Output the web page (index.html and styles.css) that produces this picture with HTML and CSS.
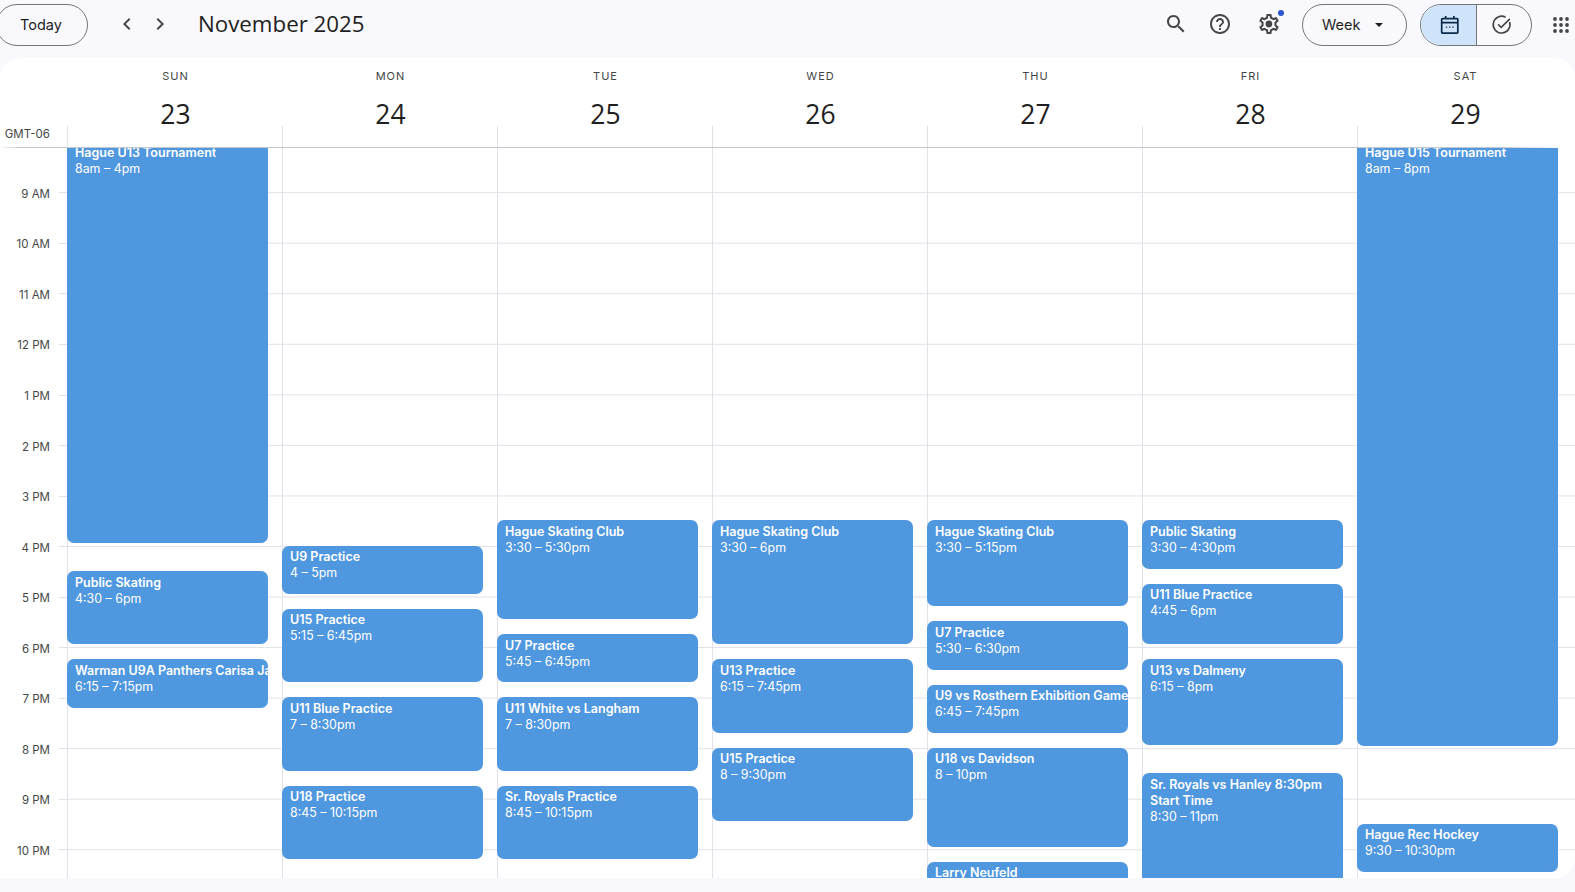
FILE: index.html
```html
<!DOCTYPE html>
<html lang="en">
<head>
<meta charset="utf-8">
<title>November 2025</title>
<link rel="stylesheet" href="styles.css">
</head>
<body>
<header class="topbar">
  <button class="pill today">Today</button>
  <div class="nav">
    <svg class="chev" viewBox="0 0 24 24"><path d="M15.4 7.4 14 6l-6 6 6 6 1.4-1.4L10.8 12z"/></svg>
    <svg class="chev" viewBox="0 0 24 24"><path d="M8.6 16.6 10 18l6-6-6-6-1.4 1.4 4.6 4.6z"/></svg>
  </div>
  <h1 class="month">November 2025</h1>
  <div class="tools">
    <svg class="icon search" viewBox="0 0 24 24"><path d="M15.5 14h-.79l-.28-.27C15.41 12.59 16 11.11 16 9.5 16 5.91 13.09 3 9.5 3S3 5.91 3 9.5 5.91 16 9.5 16c1.61 0 3.09-.59 4.23-1.57l.27.28v.79l5 4.99L20.49 19l-4.99-5zm-6 0C7.01 14 5 11.99 5 9.5S7.01 5 9.5 5 14 7.01 14 9.5 11.99 14 9.5 14z"/></svg>
    <svg class="icon help" viewBox="0 0 24 24"><path d="M11 18h2v-2h-2v2zm1-16C6.48 2 2 6.48 2 12s4.48 10 10 10 10-4.48 10-10S17.52 2 12 2zm0 18c-4.41 0-8-3.59-8-8s3.59-8 8-8 8 3.59 8 8-3.59 8-8 8zm0-14c-2.21 0-4 1.79-4 4h2c0-1.1.9-2 2-2s2 .9 2 2c0 2-3 1.75-3 5h2c0-2.25 3-2.5 3-5 0-2.21-1.79-4-4-4z"/></svg>
    <span class="gear">
      <svg class="icon" viewBox="0 0 24 24"><path d="M19.43 12.98c.04-.32.07-.64.07-.98 0-.34-.03-.66-.07-.98l2.11-1.65c.19-.15.24-.42.12-.64l-2-3.46c-.09-.16-.26-.25-.44-.25-.06 0-.12.01-.17.03l-2.49 1c-.52-.4-1.08-.73-1.69-.98l-.38-2.65C14.46 2.18 14.25 2 14 2h-4c-.25 0-.46.18-.49.42l-.38 2.65c-.61.25-1.17.59-1.69.98l-2.49-1c-.06-.02-.12-.03-.18-.03-.17 0-.34.09-.43.25l-2 3.46c-.13.22-.07.49.12.64l2.11 1.65c-.04.32-.07.65-.07.98 0 .33.03.66.07.98l-2.11 1.65c-.19.15-.24.42-.12.64l2 3.46c.09.16.26.25.44.25.06 0 .12-.01.17-.03l2.49-1c.52.4 1.08.73 1.69.98l.38 2.65c.03.24.24.42.49.42h4c.25 0 .46-.18.49-.42l.38-2.65c.61-.25 1.17-.59 1.69-.98l2.49 1c.06.02.12.03.18.03.17 0 .34-.09.43-.25l2-3.46c.12-.22.07-.49-.12-.64l-2.11-1.65zm-1.98-1.71c.04.31.05.52.05.73 0 .21-.02.43-.05.73l-.14 1.13.89.7 1.08.84-.7 1.21-1.27-.51-1.04-.42-.9.68c-.43.32-.84.56-1.25.73l-1.06.43-.16 1.13-.2 1.35h-1.4l-.19-1.35-.16-1.13-1.06-.43c-.43-.18-.83-.41-1.23-.71l-.91-.7-1.06.43-1.27.51-.7-1.21 1.08-.84.89-.7-.14-1.13c-.03-.31-.05-.54-.05-.74s.02-.43.05-.73l.14-1.13-.89-.7-1.08-.84.7-1.21 1.27.51 1.04.42.9-.68c.43-.32.84-.56 1.25-.73l1.06-.43.16-1.13.2-1.35h1.39l.19 1.35.16 1.13 1.06.43c.43.18.83.41 1.23.71l.91.7 1.06-.43 1.27-.51.7 1.21-1.07.85-.89.7.14 1.13z"/><circle cx="12" cy="12" r="3.4"/></svg>
      <i class="dot"></i>
    </span>
    <button class="pill viewbtn">Week<i class="caret"></i></button>
    <div class="toggle">
      <span class="seg on">
        <svg class="seg-icon" viewBox="0 0 20 20"><path d="M3.200 4.200h13.600a.7.7 0 0 1 .7.7v12.100a.7.7 0 0 1-.7.7H3.200a.7.7 0 0 1-.7-.7V4.900a.7.7 0 0 1 .7-.7zM2.500 8h15M6.200 1.800v3.400M13.800 1.800v3.400" fill="none" stroke-width="1.600"/><path d="M6.400 11.700h1.200v1.200H6.400zM9.400 11.700h1.200v1.200H9.400zM12.400 11.700h1.200v1.200h-1.200z" stroke="none"/></svg>
      </span>
      <span class="seg off">
        <svg class="seg-icon check" viewBox="0 0 20 20"><path d="M17.300 7.500A7.800 7.800 0 1 1 13.600 3M6.600 9.600l2.900 2.900 8-8" fill="none" stroke-width="1.500"/></svg>
      </span>
    </div>
    <svg class="apps" viewBox="0 0 18 18"><circle cx="3" cy="3" r="1.900"/><circle cx="9" cy="3" r="1.900"/><circle cx="15" cy="3" r="1.900"/><circle cx="3" cy="9" r="1.900"/><circle cx="9" cy="9" r="1.900"/><circle cx="15" cy="9" r="1.900"/><circle cx="3" cy="15" r="1.900"/><circle cx="9" cy="15" r="1.900"/><circle cx="15" cy="15" r="1.900"/></svg>
  </div>
</header>

<main class="panel">
  <div class="head">
    <div class="tz">GMT-06</div>
    <div class="dayhead"><span class="dow">SUN</span><span class="num">23</span><i class="tick"></i></div>
    <div class="dayhead"><span class="dow">MON</span><span class="num">24</span><i class="tick"></i></div>
    <div class="dayhead"><span class="dow">TUE</span><span class="num">25</span><i class="tick"></i></div>
    <div class="dayhead"><span class="dow">WED</span><span class="num">26</span><i class="tick"></i></div>
    <div class="dayhead"><span class="dow">THU</span><span class="num">27</span><i class="tick"></i></div>
    <div class="dayhead"><span class="dow">FRI</span><span class="num">28</span><i class="tick"></i></div>
    <div class="dayhead"><span class="dow">SAT</span><span class="num">29</span><i class="tick"></i></div>
  </div>
  <div class="scroller">
    <div class="week">
      <div class="gutter">
        <div class="hr"><span>9 AM</span></div>
        <div class="hr"><span>10 AM</span></div>
        <div class="hr"><span>11 AM</span></div>
        <div class="hr"><span>12 PM</span></div>
        <div class="hr"><span>1 PM</span></div>
        <div class="hr"><span>2 PM</span></div>
        <div class="hr"><span>3 PM</span></div>
        <div class="hr"><span>4 PM</span></div>
        <div class="hr"><span>5 PM</span></div>
        <div class="hr"><span>6 PM</span></div>
        <div class="hr"><span>7 PM</span></div>
        <div class="hr"><span>8 PM</span></div>
        <div class="hr"><span>9 PM</span></div>
        <div class="hr"><span>10 PM</span></div>
      </div>
      <div class="day">
        <a class="ev" style="--s:8;--d:8"><b>Hague U13 Tournament</b><span>8am – 4pm</span></a>
        <a class="ev" style="--s:16.5;--d:1.5"><b>Public Skating</b><span>4:30 – 6pm</span></a>
        <a class="ev short" style="--s:18.25;--d:1"><b>Warman U9A Panthers Carisa Ja</b><span>6:15 – 7:15pm</span></a>
      </div>
      <div class="day">
        <a class="ev" style="--s:16;--d:1"><b>U9 Practice</b><span>4 – 5pm</span></a>
        <a class="ev" style="--s:17.25;--d:1.5"><b>U15 Practice</b><span>5:15 – 6:45pm</span></a>
        <a class="ev" style="--s:19;--d:1.5"><b>U11 Blue Practice</b><span>7 – 8:30pm</span></a>
        <a class="ev" style="--s:20.75;--d:1.5"><b>U18 Practice</b><span>8:45 – 10:15pm</span></a>
      </div>
      <div class="day">
        <a class="ev" style="--s:15.5;--d:2"><b>Hague Skating Club</b><span>3:30 – 5:30pm</span></a>
        <a class="ev" style="--s:17.75;--d:1"><b>U7 Practice</b><span>5:45 – 6:45pm</span></a>
        <a class="ev" style="--s:19;--d:1.5"><b>U11 White vs Langham</b><span>7 – 8:30pm</span></a>
        <a class="ev" style="--s:20.75;--d:1.5"><b>Sr. Royals Practice</b><span>8:45 – 10:15pm</span></a>
      </div>
      <div class="day">
        <a class="ev" style="--s:15.5;--d:2.5"><b>Hague Skating Club</b><span>3:30 – 6pm</span></a>
        <a class="ev" style="--s:18.25;--d:1.5"><b>U13 Practice</b><span>6:15 – 7:45pm</span></a>
        <a class="ev" style="--s:20;--d:1.5"><b>U15 Practice</b><span>8 – 9:30pm</span></a>
      </div>
      <div class="day">
        <a class="ev" style="--s:15.5;--d:1.75"><b>Hague Skating Club</b><span>3:30 – 5:15pm</span></a>
        <a class="ev" style="--s:17.5;--d:1"><b>U7 Practice</b><span>5:30 – 6:30pm</span></a>
        <a class="ev short" style="--s:18.75;--d:1"><b>U9 vs Rosthern Exhibition Game</b><span>6:45 – 7:45pm</span></a>
        <a class="ev" style="--s:20;--d:2"><b>U18 vs Davidson</b><span>8 – 10pm</span></a>
        <a class="ev" style="--s:22.25;--d:1.5"><b>Larry Neufeld</b></a>
      </div>
      <div class="day">
        <a class="ev" style="--s:15.5;--d:1"><b>Public Skating</b><span>3:30 – 4:30pm</span></a>
        <a class="ev" style="--s:16.75;--d:1.25"><b>U11 Blue Practice</b><span>4:45 – 6pm</span></a>
        <a class="ev" style="--s:18.25;--d:1.75"><b>U13 vs Dalmeny</b><span>6:15 – 8pm</span></a>
        <a class="ev" style="--s:20.5;--d:2.5"><b>Sr. Royals vs Hanley 8:30pm Start Time</b><span>8:30 – 11pm</span></a>
      </div>
      <div class="day">
        <a class="ev" style="--s:8;--d:12"><b>Hague U15 Tournament</b><span>8am – 8pm</span></a>
        <a class="ev" style="--s:21.5;--d:1"><b>Hague Rec Hockey</b><span>9:30 – 10:30pm</span></a>
      </div>
    </div>
  </div>
</main>
</body>
</html>
```
FILE: styles.css
```css
* { box-sizing: border-box; }
html, body { height: 100%; }
body {
  margin: 0;
  overflow: hidden;
  background: #f9f8fc;
  color: #1f1f1f;
  font-family: Inter, Roboto, "Liberation Sans", sans-serif;
  display: flex;
  flex-direction: column;
  --hour: 50.55px;
  --col: 215px;
}
button { font: inherit; color: inherit; background: none; }

/* top bar */
.topbar {
  height: 58px;
  flex: none;
  display: flex;
  align-items: flex-start;
  padding: 4px 0 0 0;
  margin-left: -4px;
}
.pill {
  height: 41.500px;
  border: 1px solid #747775;
  border-radius: 21px;
  font-size: 14.500px;
  font-weight: 400;
  padding: 0;
  color: #1f1f1f;
}
.today { width: 92px; padding-right: 2px; }
.nav { display: flex; margin-left: 27px; gap: 9px; padding-top: 8px; }
.chev { width: 24px; height: 24px; fill: #444746; }
.month {
  margin: -1px 0 0 26px;
  font-size: 22.300px;
  font-weight: 400;
  line-height: 41px;
  color: #1f1f1f;
  font-family: "Open Sans", Inter, sans-serif;
}
.tools { margin-left: auto; display: flex; align-items: flex-start; }
.icon { width: 24px; height: 24px; fill: #444746; display: block; }
.search { margin-top: 8px; }
.help { margin: 8px 0 0 20px; }
.gear { position: relative; margin: 8px 0 0 25px; }
.dot {
  position: absolute;
  width: 6px; height: 6px;
  border-radius: 50%;
  background: #2b55d0;
  right: -3px; top: -2px;
}
.viewbtn {
  width: 105px;
  margin-left: 21px;
  display: flex;
  align-items: center;
  padding-left: 19px;
}
.caret {
  margin-left: 15px;
  border: 4px solid transparent;
  border-top: 4px solid #1f1f1f;
  border-bottom: 0;
  width: 8px; height: 4px;
}
.toggle {
  margin-left: 13px;
  width: 112px;
  height: 41.500px;
  border: 1px solid #747775;
  border-radius: 21px;
  display: flex;
  overflow: hidden;
}
.seg { flex: 1; display: flex; align-items: center; justify-content: center; }
.seg.on { background: #cfe4fb; border-right: 1px solid #747775; flex: 0 0 56px; padding-left: 3px; }
.seg.off { padding-right: 4px; }
.seg-icon { width: 21.500px; height: 21.500px; stroke: #0b2a4a; fill: #0b2a4a; }
.seg-icon.check { stroke: #444746; fill: none; }
.apps { width: 18px; height: 18px; margin: 11.500px 5px 0 20px; fill: #444746; flex: none; }

/* calendar panel */
.panel {
  background: #fff;
  height: 820px;
  flex: none;
  border-radius: 20px 20px 20px 0;
  overflow: hidden;
  display: flex;
  flex-direction: column;
}
.head {
  display: flex;
  height: 90px;
  flex: none;
  position: relative;
}
.head::after {
  content: "";
  position: absolute;
  left: 0; right: 0; bottom: 0;
  height: 1px;
  z-index: 2;
  background: linear-gradient(to right, #fff 0, #c6c6ce 18px, #c6c6ce 1500px, #fff 1560px);
}
.tz {
  width: 67px;
  font-size: 11.500px;
  color: #444746;
  text-align: right;
  padding: 68px 17px 0 0;
  line-height: 16px;
  flex: none;
}
.dayhead {
  width: var(--col);
  position: relative;
  display: flex;
  flex-direction: column;
  align-items: center;
  flex: none;
  padding-left: 2px;
}
.dow {
  margin-top: 10px;
  font-size: 11px;
  line-height: 16px;
  letter-spacing: 1px;
  font-weight: 400;
  color: #444746;
}
.num {
  margin-top: 12px;
  font-size: 26.500px;
  line-height: 36px;
  color: #1f1f1f;
  font-family: "Open Sans", Inter, sans-serif;
}
.tick {
  position: absolute;
  left: 0; bottom: 0;
  height: 22px;
  border-left: 1px solid #e0e0e8;
}
.scroller { flex: 1; overflow: hidden; min-height: 0; }
.week {
  display: flex;
  margin-top: -6.800px;
}
.gutter { width: 67px; flex: none; padding-top: calc(var(--hour) + .6px); }
.hr {
  height: var(--hour);
  position: relative;
}
.hr::after {
  content: "";
  position: absolute;
  left: 59px; right: 0; top: 0;
  border-top: 1px solid #e2e1ea;
}
.hr span {
  position: absolute;
  right: 17px;
  top: -6.500px;
  font-size: 11.500px;
  line-height: 16px;
  color: #444746;
}
.day {
  width: var(--col);
  flex: none;
  height: 800px;
  position: relative;
  border-left: 1px solid #e2e1ea;
  background-image: linear-gradient(#e2e1ea 1px, transparent 1px);
  background-size: 100% var(--hour);
  background-position: 0 .6px;
}
.day:last-child { flex: 1; }
.ev {
  position: absolute;
  left: -1px;
  width: 201px;
  top: calc((var(--s) - 8) * var(--hour));
  height: calc(var(--d) * var(--hour) - 2.300px);
  background: #4f97de;
  border-radius: 7px;
  color: #fff;
  font-size: 12.400px;
  line-height: 16px;
  padding: 3.700px 0 0 8px;
  overflow: hidden;
}
.ev b, .ev span { display: block; }
.ev b { font-weight: 600; font-size: 12.500px; }
.short b { white-space: nowrap; }
```
